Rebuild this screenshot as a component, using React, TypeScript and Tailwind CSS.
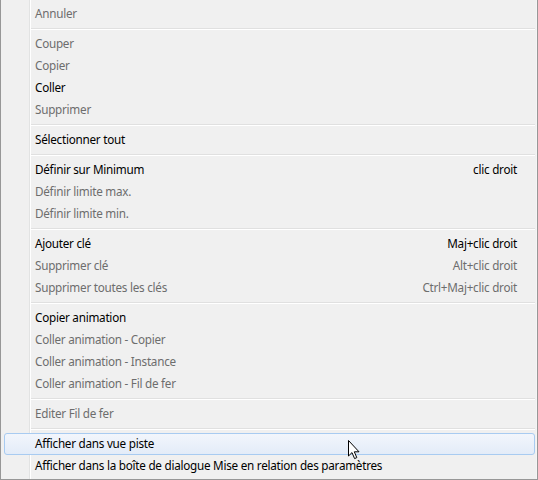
type Item = { label: string; shortcut?: string; disabled?: boolean; hover?: boolean };

const groups: Item[][] = [
  [{ label: "Annuler", disabled: true }],
  [
    { label: "Couper", disabled: true },
    { label: "Copier", disabled: true },
    { label: "Coller" },
    { label: "Supprimer", disabled: true },
  ],
  [{ label: "Sélectionner tout" }],
  [
    { label: "Définir sur Minimum", shortcut: "clic droit" },
    { label: "Définir limite max.", disabled: true },
    { label: "Définir limite min.", disabled: true },
  ],
  [
    { label: "Ajouter clé", shortcut: "Maj+clic droit" },
    { label: "Supprimer clé", shortcut: "Alt+clic droit", disabled: true },
    { label: "Supprimer toutes les clés", shortcut: "Ctrl+Maj+clic droit", disabled: true },
  ],
  [
    { label: "Copier animation" },
    { label: "Coller animation - Copier", disabled: true },
    { label: "Coller animation - Instance", disabled: true },
    { label: "Coller animation - Fil de fer", disabled: true },
  ],
  [{ label: "Editer Fil de fer", disabled: true }],
  [
    { label: "Afficher dans vue piste", hover: true },
    { label: "Afficher dans la boîte de dialogue Mise en relation des paramètres" },
  ],
];

function Cursor() {
  return (
    <svg className="absolute left-[347px] top-[440px]" width="13" height="20" viewBox="0 0 13 20">
      <path
        d="M0.5 0.5 L0.5 16 L4 12.6 L6.6 18.6 L8.8 17.6 L6.3 11.8 L11 11.8 Z"
        fill="#fff"
        stroke="#000"
        strokeWidth="1"
        strokeLinejoin="miter"
      />
    </svg>
  );
}

function MenuRow({ item }: { item: Item }) {
  return (
    <div
      className={`relative h-[22px] flex items-center pl-[32px] pr-[18px] text-[11.7px] tracking-[-0.25px] ${
        item.disabled ? "text-[#6d6d6d]" : "text-black"
      }`}
    >
      {item.hover && (
        <div className="absolute left-[1px] right-0 top-0 bottom-0 rounded-[3px] border border-[#a8cbf1] bg-gradient-to-b from-[#f2f6fc] to-[#e3ecf8]" />
      )}
      <span className="relative flex-1 whitespace-nowrap">{item.label}</span>
      {item.shortcut && <span className="relative whitespace-nowrap">{item.shortcut}</span>}
    </div>
  );
}

export default function App() {
  return (
    <div
      className="relative w-[538px] h-[480px] bg-[#f0f0f0] border-x border-b border-[#979797] overflow-hidden"
      style={{ fontFamily: '"Segoe UI", "Noto Sans", sans-serif' }}
    >
      <div className="h-full border-r border-[#f5f5f5] pt-[3px] pl-[2px] pr-[1px]">
        <div className="relative">
          <div className="absolute left-[26px] top-[-3px] h-[480px] w-[2px] border-l border-[#e2e3e3] bg-white" />
          {groups.map((group, gi) => (
            <div key={gi}>
              {gi > 0 && (
                <div className="h-[8px] flex flex-col justify-center pl-[28px]">
                  <div className="h-[2px] border-t border-[#e0e0e0] bg-white" />
                </div>
              )}
              {group.map((item, ii) => (
                <MenuRow key={ii} item={item} />
              ))}
            </div>
          ))}
        </div>
      </div>
      <Cursor />
    </div>
  );
}
